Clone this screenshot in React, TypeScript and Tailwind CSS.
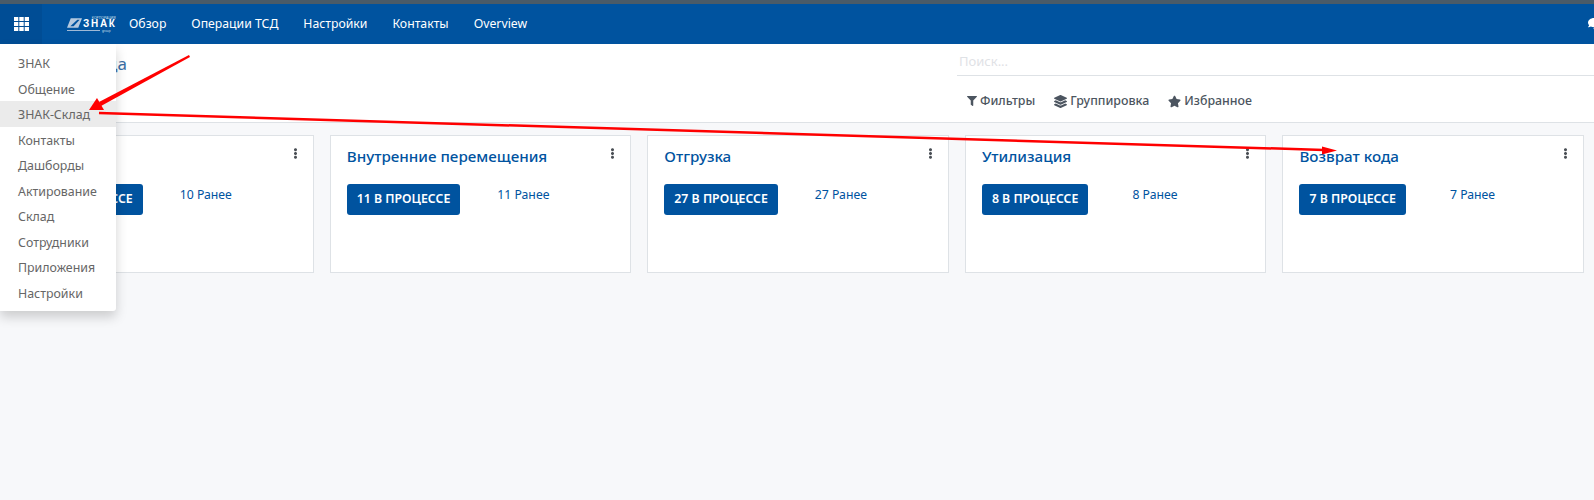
import { FaComments, FaEllipsisV, FaFilter, FaLayerGroup, FaStar } from "react-icons/fa";

const navItems = ["Обзор", "Операции ТСД", "Настройки", "Контакты", "Overview"];

const menuItems = ["ЗНАК", "Общение", "ЗНАК-Склад", "Контакты", "Дашборды", "Актирование", "Склад", "Сотрудники", "Приложения", "Настройки"];

const cards = [
  { title: "Приёмка", count: 10 },
  { title: "Внутренние перемещения", count: 11 },
  { title: "Отгрузка", count: 27 },
  { title: "Утилизация", count: 8 },
  { title: "Возврат кода", count: 7 },
];

function AppsIcon() {
  return (
    <svg width="15" height="14" viewBox="0 0 15 14" fill="#fff">
      <rect x="0" y="0" width="4.3" height="4" />
      <rect x="5.3" y="0" width="4.4" height="4" />
      <rect x="10.7" y="0" width="4.3" height="4" />
      <rect x="0" y="5" width="4.3" height="4" />
      <rect x="5.3" y="5" width="4.4" height="4" />
      <rect x="10.7" y="5" width="4.3" height="4" />
      <rect x="0" y="10" width="4.3" height="4" />
      <rect x="5.3" y="10" width="4.4" height="4" />
      <rect x="10.7" y="10" width="4.3" height="4" />
    </svg>
  );
}

function Logo() {
  return (
    <div className="w-[50px] shrink-0 text-white">
      <div className="flex items-end">
        <svg width="15" height="10" viewBox="0 0 16 10" className="shrink-0">
          <path d="M4 0h12l-4 10H0z" fill="#b4c9df" />
          <path d="M11 1.5h2.5L7 8.5H3.5z" fill="#00539f" />
        </svg>
        <div className="flex flex-col items-end leading-none ml-[1px]">
          <span className="text-[3.5px] leading-[4px] text-[#d3e0ee]">КОРПОРАЦИЯ</span>
          <span className="text-[10px] leading-[8px] font-black font-['Liberation_Sans',sans-serif] tracking-[1.7px] mr-[-1px]">ЗНАК</span>
        </div>
      </div>
      <div className="flex items-center gap-[2px] mt-[1px]">
        <div className="h-px w-[33px] bg-[#9fb9d6]" />
        <span className="text-[3px] leading-[4px] text-[#d3e0ee]">group</span>
      </div>
    </div>
  );
}

function Card({ title, count }: { title: string; count: number }) {
  return (
    <div className="h-[138px] bg-white border border-[#dee2e6] pl-[16px] pr-[12px] pt-[9px]">
      <div className="flex justify-between">
        <div className="text-[15.2px] leading-[22px] font-medium text-[#00539f]">{title}</div>
        <FaEllipsisV className="text-[#4a4f55] text-[11px] mt-[3px]" />
      </div>
      <div className="flex mt-[17px]">
        <div className="w-[150.5px] shrink-0">
          <button className="h-[31px] px-[10px] rounded-[3px] bg-[#00539f] text-white text-[12.3px] font-semibold">
            {count} В ПРОЦЕССЕ
          </button>
        </div>
        <div className="pt-[1px] text-[12.25px] leading-[20px] text-[#00539f]">{count} Ранее</div>
      </div>
    </div>
  );
}

export default function App() {
  return (
    <div className="relative h-[500px] overflow-hidden bg-[#f7f8fa] font-['Noto_Sans',sans-serif]">
      <div className="h-[4px] bg-[#4a5b68]" />
      <nav className="flex items-center h-[40px] bg-[#00539f] text-white">
        <div className="flex items-center pl-[14px] w-[42px] h-full bg-[#004d95] shrink-0">
          <AppsIcon />
        </div>
        <div className="ml-[25px]">
          <Logo />
        </div>
        <div className="flex items-center ml-[12px] gap-[25px] text-[12.25px]">
          {navItems.map((item) => (
            <span key={item}>{item}</span>
          ))}
        </div>
        <FaComments className="ml-auto mr-[-11px] text-[17px]" />
      </nav>

      <div className="flex justify-between h-[79px] bg-white border-b border-[#dee2e6]">
        <div className="pl-[14px] pt-[7px] text-[17px] leading-[26px] text-[#3b6fa5]">Обзор склада</div>
        <div className="w-[637px] shrink-0">
          <div className="h-[32px] border-b border-[#dee2e6] pl-[2px] pt-[8px] text-[13px] leading-[18px] text-[#dfe2e6]">Поиск...</div>
          <div className="flex items-center gap-[19px] pl-[10px] pt-[15px] text-[12.4px] leading-[20px] font-medium text-[#4c5560]">
            <span className="flex items-center gap-[3px]">
              <FaFilter className="text-[10px]" />
              Фильтры
            </span>
            <span className="flex items-center gap-[3px]">
              <FaLayerGroup className="text-[13px]" />
              Группировка
            </span>
            <span className="flex items-center gap-[3px]">
              <FaStar className="text-[13px]" />
              Избранное
            </span>
          </div>
        </div>
      </div>

      <div className="grid grid-cols-5 gap-4 pl-[12.2px] pr-[10px] pt-[12px]">
        {cards.map((card) => (
          <Card key={card.title} title={card.title} count={card.count} />
        ))}
      </div>

      <div className="absolute left-0 top-[44px] w-[116px] h-[267px] pt-[6px] bg-white rounded-br-[3px] shadow-[0_6px_12px_rgba(0,0,0,0.18)]">
        {menuItems.map((item) => (
          <div
            key={item}
            className={
              item === "ЗНАК-Склад"
                ? "h-[25.5px] pl-[18px] text-[12.4px] leading-[27px] text-[#666] bg-[#ebebeb]"
                : "h-[25.5px] pl-[18px] text-[12.4px] leading-[27px] text-[#666]"
            }
          >
            {item}
          </div>
        ))}
      </div>

      <svg className="absolute left-0 top-0 pointer-events-none" width="1594" height="500">
        <polygon points="189,55 190,57 101,106 99,102" fill="#ff0000" />
        <polygon points="89,110 97,98 104,110" fill="#ff0000" />
        <line x1="99" y1="113" x2="1324" y2="150" stroke="#ff0000" strokeWidth="2.5" />
        <polygon points="1337,150.5 1322,146.5 1322,154.5" fill="#ff0000" />
      </svg>
    </div>
  );
}
